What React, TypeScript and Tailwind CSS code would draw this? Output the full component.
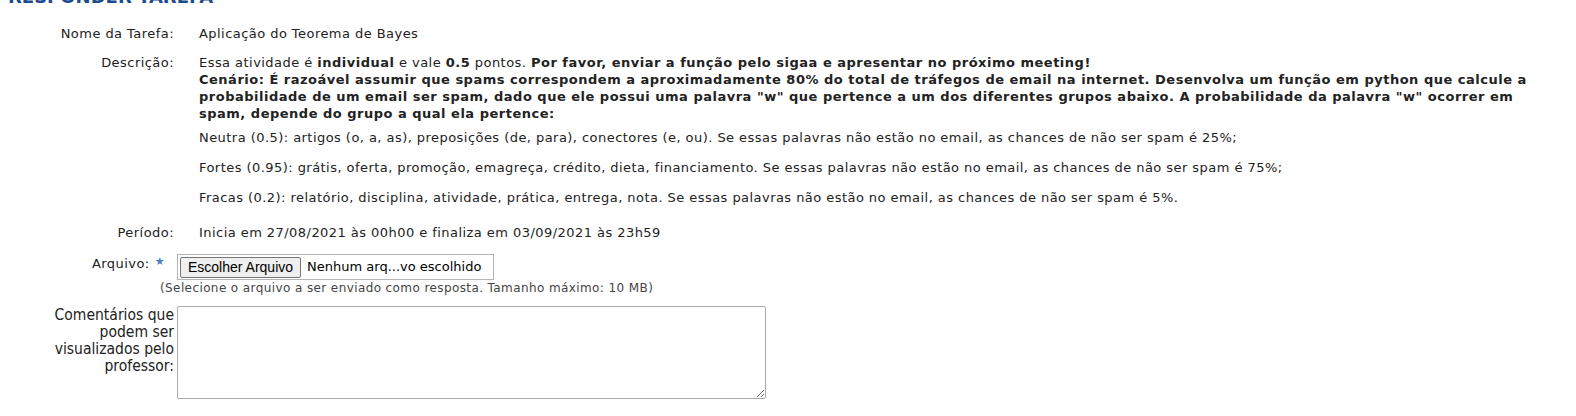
import React from "react";

const V = { fontFamily: "Verdana, 'DejaVu Sans', sans-serif" };

export default function App() {
  return (
    <div className="w-[1576px] h-[416px] overflow-hidden bg-white text-[13px] text-[#222] tracking-[0.45px]" style={V}>
      <div className="mt-[-13px] pl-[8px] h-[20px] text-[18px] font-bold leading-[20px] tracking-normal text-[#1d4b8f]">RESPONDER TAREFA</div>
      <div className="flex flex-col">
        <div className="flex pt-[18px] leading-[17px]">
          <div className="w-[174px] text-right shrink-0">Nome da Tarefa:</div>
          <div className="pl-[25px]">Aplicação do Teorema de Bayes</div>
        </div>
        <div className="flex pt-[12px] leading-[17px]">
          <div className="w-[174px] text-right shrink-0">Descrição:</div>
          <div className="pl-[25px] w-[1370px]">
            <div>
              Essa atividade é <b className="tracking-[0.5px]">individual</b> e vale <b className="tracking-[0.5px]">0.5</b> pontos.{" "}
              <b className="tracking-[0.5px]">Por favor, enviar a função pelo sigaa e apresentar no próximo meeting!</b>
              <br />
              <b className="tracking-[0.5px]">
                Cenário: É razoável assumir que spams correspondem a aproximadamente 80% do total de tráfegos de email na internet. Desenvolva um função em python que calcule a probabilidade de um email ser spam, dado que ele possui uma palavra "w" que pertence a um dos diferentes grupos abaixo. A probabilidade da palavra "w" ocorrer em spam, depende do grupo a qual ela pertence:
              </b>
            </div>
            <p className="mt-[7px]">Neutra (0.5): artigos (o, a, as), preposições (de, para), conectores (e, ou). Se essas palavras não estão no email, as chances de não ser spam é 25%;</p>
            <p className="mt-[13px]">Fortes (0.95): grátis, oferta, promoção, emagreça, crédito, dieta, financiamento. Se essas palavras não estão no email, as chances de não ser spam é 75%;</p>
            <p className="mt-[13px]">Fracas (0.2): relatório, disciplina, atividade, prática, entrega, nota. Se essas palavras não estão no email, as chances de não ser spam é 5%.</p>
          </div>
        </div>
        <div className="flex pt-[18px] leading-[17px]">
          <div className="w-[174px] text-right shrink-0">Período:</div>
          <div className="pl-[25px]">Inicia em 27/08/2021 às 00h00 e finaliza em 03/09/2021 às 23h59</div>
        </div>
        <div className="flex pt-[13px]">
          <div className="w-[177px] shrink-0 flex justify-end items-start pr-[12px] leading-[17px] pt-[1px]">
            <span>Arquivo:</span>
            <span className="ml-[5px] text-[#4a7fd0] text-[11px] leading-[14px]">★</span>
          </div>
          <div className="flex items-center w-[317px] h-[26px] border border-[#b5b5b5] bg-white">
            <button
              className="ml-[2px] h-[21px] px-[7px] border border-[#767676] rounded-[2px] bg-[#efefef] text-[14px] text-black leading-[19px] tracking-normal"
              style={{ fontFamily: "Arial, 'Liberation Sans', sans-serif" }}
            >
              Escolher Arquivo
            </button>
            <span className="ml-[6px] text-[13px] text-black whitespace-nowrap tracking-normal">Nenhum arq...vo escolhido</span>
          </div>
        </div>
        <div className="pl-[160px] text-[12px] text-[#444] leading-[16px] tracking-[0.4px]">(Selecione o arquivo a ser enviado como resposta. Tamanho máximo: 10 MB)</div>
        <div className="flex pt-[10px]">
          <div
            className="w-[177px] shrink-0 text-right pr-[3px] text-[15.5px] leading-[17px] pt-[1px] tracking-normal whitespace-nowrap"
            style={{ fontFamily: "'DejaVu Sans Condensed', 'Liberation Sans Narrow', sans-serif" }}
          >
            Comentários que
            <br />
            podem ser
            <br />
            visualizados pelo
            <br />
            professor:
          </div>
          <textarea className="w-[589px] h-[93px] border border-[#aaa] rounded-[2px] bg-white outline-none resize" />
        </div>
      </div>
    </div>
  );
}
